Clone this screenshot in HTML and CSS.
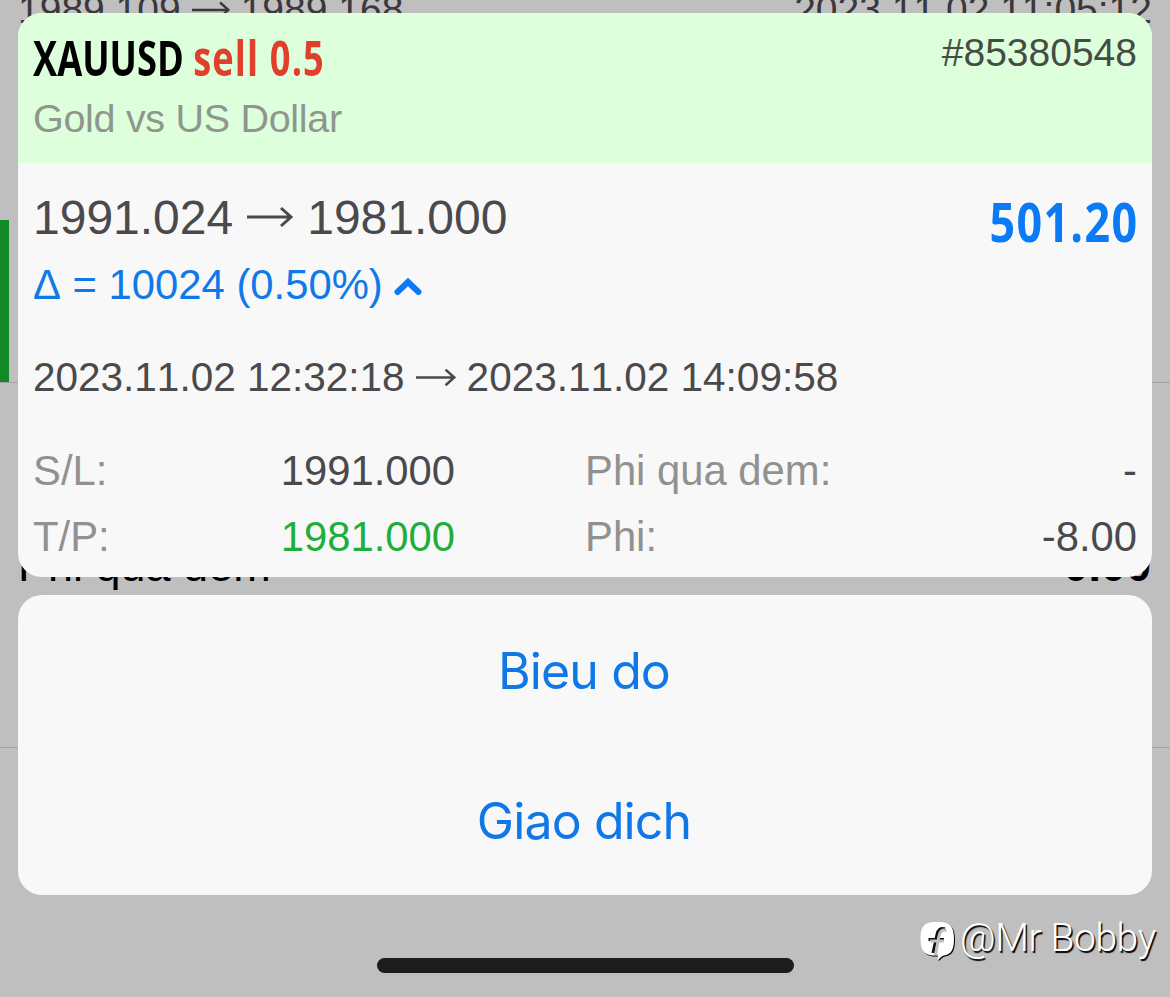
FILE: index.html
```
<!DOCTYPE html>
<html lang="en">
<head>
    <meta charset="UTF-8">
    <meta name="viewport" content="width=device-width, initial-scale=1.0">
    <title>XAUUSD sell 0.5</title>
    <link rel="stylesheet" href="styles.css">
</head>
<body>
    <!-- History list under the sheet -->
    <div class="history">
        <div class="history-row">
            <div class="route">
                <span>1989.109</span>
                <svg class="arrow" viewBox="0 0 46 24"><path d="M0 12H43M34 3L44 12L34 21"/></svg>
                <span>1989.168</span>
            </div>
            <span>2023.11.02 11:05:12</span>
        </div>
        <div class="selected"></div>
        <div class="totals">
            <span>Phi qua dem</span>
            <span class="total-value">0.00</span>
        </div>
    </div>

    <div class="sheet">
        <div class="card">
            <div class="card-header">
                <div>
                    <div class="title"><span class="symbol">XAUUSD</span> <span class="sell">sell 0.5</span></div>
                    <div class="description">Gold vs US Dollar</div>
                </div>
                <div class="ticket">#85380548</div>
            </div>
            <div class="card-body">
                <div class="price-row">
                    <div class="route prices">
                        <span>1991.024</span>
                        <svg class="arrow" viewBox="0 0 46 24"><path d="M0 12H43M34 3L44 12L34 21"/></svg>
                        <span>1981.000</span>
                    </div>
                    <div class="profit">501.20</div>
                </div>
                <div class="delta">
                    <span>Δ = 10024 (0.50%)</span>
                    <svg class="chevron" viewBox="0 0 28 20"><path d="M3.500 15L14 5L24.500 15"/></svg>
                </div>
                <div class="route dates">
                    <span>2023.11.02 12:32:18</span>
                    <svg class="arrow" viewBox="0 0 46 24"><path d="M0 12H43M34 3L44 12L34 21"/></svg>
                    <span>2023.11.02 14:09:58</span>
                </div>
                <div class="details">
                    <span class="label">S/L:</span>
                    <span class="value">1991.000</span>
                    <span class="label fee">Phi qua dem:</span>
                    <span class="value">-</span>
                    <span class="label">T/P:</span>
                    <span class="value hit">1981.000</span>
                    <span class="label fee">Phi:</span>
                    <span class="value">-8.00</span>
                </div>
            </div>
        </div>

        <div class="actions">
            <button>Bieu do</button>
            <button>Giao dich</button>
        </div>
    </div>

    <div class="home-bar"></div>

    <div class="watermark">
        <svg class="logo" viewBox="0 0 36 42">
            <path class="bubble" d="M17 1C28 1 34 3 34 18C34 29 31 33.500 24 34.500C21 35 20 38 17.500 39L18 34.500C6 35 0.500 32 0.500 18C0.500 3 6 1 17 1Z"/>
            <path class="mark shade" d="M25 8C20.500 6.500 18 9 17 13.500L13 32M8.500 18.500H24"/>
            <path class="mark" d="M26.500 9.500C22 8 20 10.500 19 15L15.500 34M10 20H24"/>
        </svg>
        <span>@Mr Bobby</span>
    </div>
</body>
</html>
```
FILE: styles.css
```
* {
    box-sizing: border-box;
}
body {
    margin: 0;
    position: relative;
    width: 1170px;
    height: 997px;
    overflow: hidden;
    background: #bfbfbf;
    color: #4a494c;
    font-family: "Liberation Sans", Arial, sans-serif;
    font-kerning: none;
    white-space: nowrap;
}

/* history list, scrolled a little under the top edge */
.history {
    position: absolute;
    top: -14px;
    left: 0;
    right: 0;
}
.history-row {
    display: flex;
    justify-content: space-between;
    align-items: flex-start;
    height: 234px;
    padding: 0 18px;
    font-size: 39px;
    line-height: 48px;
    color: #3a383b;
}
.history-row .route {
    gap: 11px;
}
.history-row .arrow {
    width: 38px;
}
.selected {
    height: 163px;
    border-bottom: 1px solid #a3a3a5;
    box-shadow: inset 9px 0 #118a25;
}
.totals {
    display: flex;
    justify-content: space-between;
    height: 365px;
    padding: 157px 19px 0 18px;
    border-bottom: 1px solid #a3a3a5;
    font-size: 45px;
    line-height: 52px;
    color: #000;
}
.total-value {
    font-weight: bold;
}

/* sheet */
.sheet {
    position: relative;
    display: flex;
    flex-direction: column;
    gap: 18px;
    padding: 13px 18px 0;
}
.card, .actions {
    background: #f8f8f8;
    border-radius: 24px;
    overflow: hidden;
}
.card {
    height: 564px;
}
.card-header {
    display: flex;
    justify-content: space-between;
    height: 150px;
    padding: 15px 15px 0;
    background: #deffdb;
}
.title, .profit {
    font-family: "Open Sans", sans-serif;
    font-weight: 700;
    line-height: 60px;
}
.title {
    width: 0;
    font-size: 48px;
    transform: scaleX(0.755);
    transform-origin: left;
}
.symbol {
    color: #000;
}
.sell {
    color: #e03f2b;
    letter-spacing: 1.5px;
}
.description {
    margin-top: 6px;
    font-size: 39.5px;
    line-height: 48px;
    letter-spacing: -0.3px;
    color: #8e968e;
}
.ticket {
    margin-top: 1px;
    font-size: 39px;
    line-height: 48px;
    color: #454c46;
}
.card-body {
    padding: 25px 15px 0;
}
.price-row {
    display: flex;
    justify-content: space-between;
    height: 66px;
}
.route {
    display: flex;
    align-items: center;
}
.arrow {
    width: 46px;
    fill: none;
    stroke: currentColor;
    stroke-width: 3;
}
.prices {
    gap: 14px;
    height: 60px;
    font-size: 48px;
    line-height: 60px;
}
.prices .arrow {
    position: relative;
    top: -1px;
}
.profit {
    margin-top: 3px;
    margin-right: -1px;
    font-size: 54px;
    letter-spacing: 1.6px;
    color: #0a7af5;
    transform: scaleX(0.83);
    transform-origin: right;
}
.delta {
    display: flex;
    align-items: center;
    gap: 11px;
    margin-top: 6px;
    font-size: 41.8px;
    line-height: 50px;
    color: #0f79e8;
}
.chevron {
    width: 28px;
    margin-top: 4px;
    fill: none;
    stroke: #0a7af5;
    stroke-width: 6;
    stroke-linecap: round;
}
.dates {
    gap: 11px;
    margin-top: 42px;
    font-size: 40.5px;
    line-height: 50px;
}
.dates .arrow {
    width: 40px;
}
.details {
    display: grid;
    grid-template-columns: 212px 210px 1fr auto;
    margin-top: 36px;
    font-size: 41.8px;
    line-height: 66px;
}
.label {
    color: #919191;
}
.fee {
    margin-left: 130px;
}
.value {
    text-align: right;
}
.hit {
    color: #1eae3c;
}
.actions {
    display: flex;
    flex-direction: column;
}
.actions button {
    height: 150px;
    padding: 2px 2px 0 0;
    border: 0;
    background: none;
    color: #1078e6;
    font-family: Inter, sans-serif;
    font-size: 50px;
    letter-spacing: -0.9px;
}

.home-bar {
    position: absolute;
    left: 377px;
    bottom: 24px;
    width: 417px;
    height: 15px;
    border-radius: 8px;
    background: #1c1c1c;
}
.watermark {
    position: absolute;
    right: 14px;
    bottom: 34px;
    display: flex;
    align-items: center;
    gap: 4px;
    color: #fff;
    font-family: Roboto, sans-serif;
    font-size: 39px;
    font-weight: 300;
    line-height: 46px;
    letter-spacing: -0.4px;
    text-shadow: 1.5px 1.5px 1px #000;
}
.logo {
    width: 36px;
    height: 42px;
    margin-top: 8px;
    filter: drop-shadow(1.5px 1.5px 0.5px #000);
}
.bubble {
    fill: #fff;
}
.mark {
    fill: none;
    stroke: #bfbfbf;
    stroke-width: 3;
}
.shade {
    stroke: #111;
}
```
